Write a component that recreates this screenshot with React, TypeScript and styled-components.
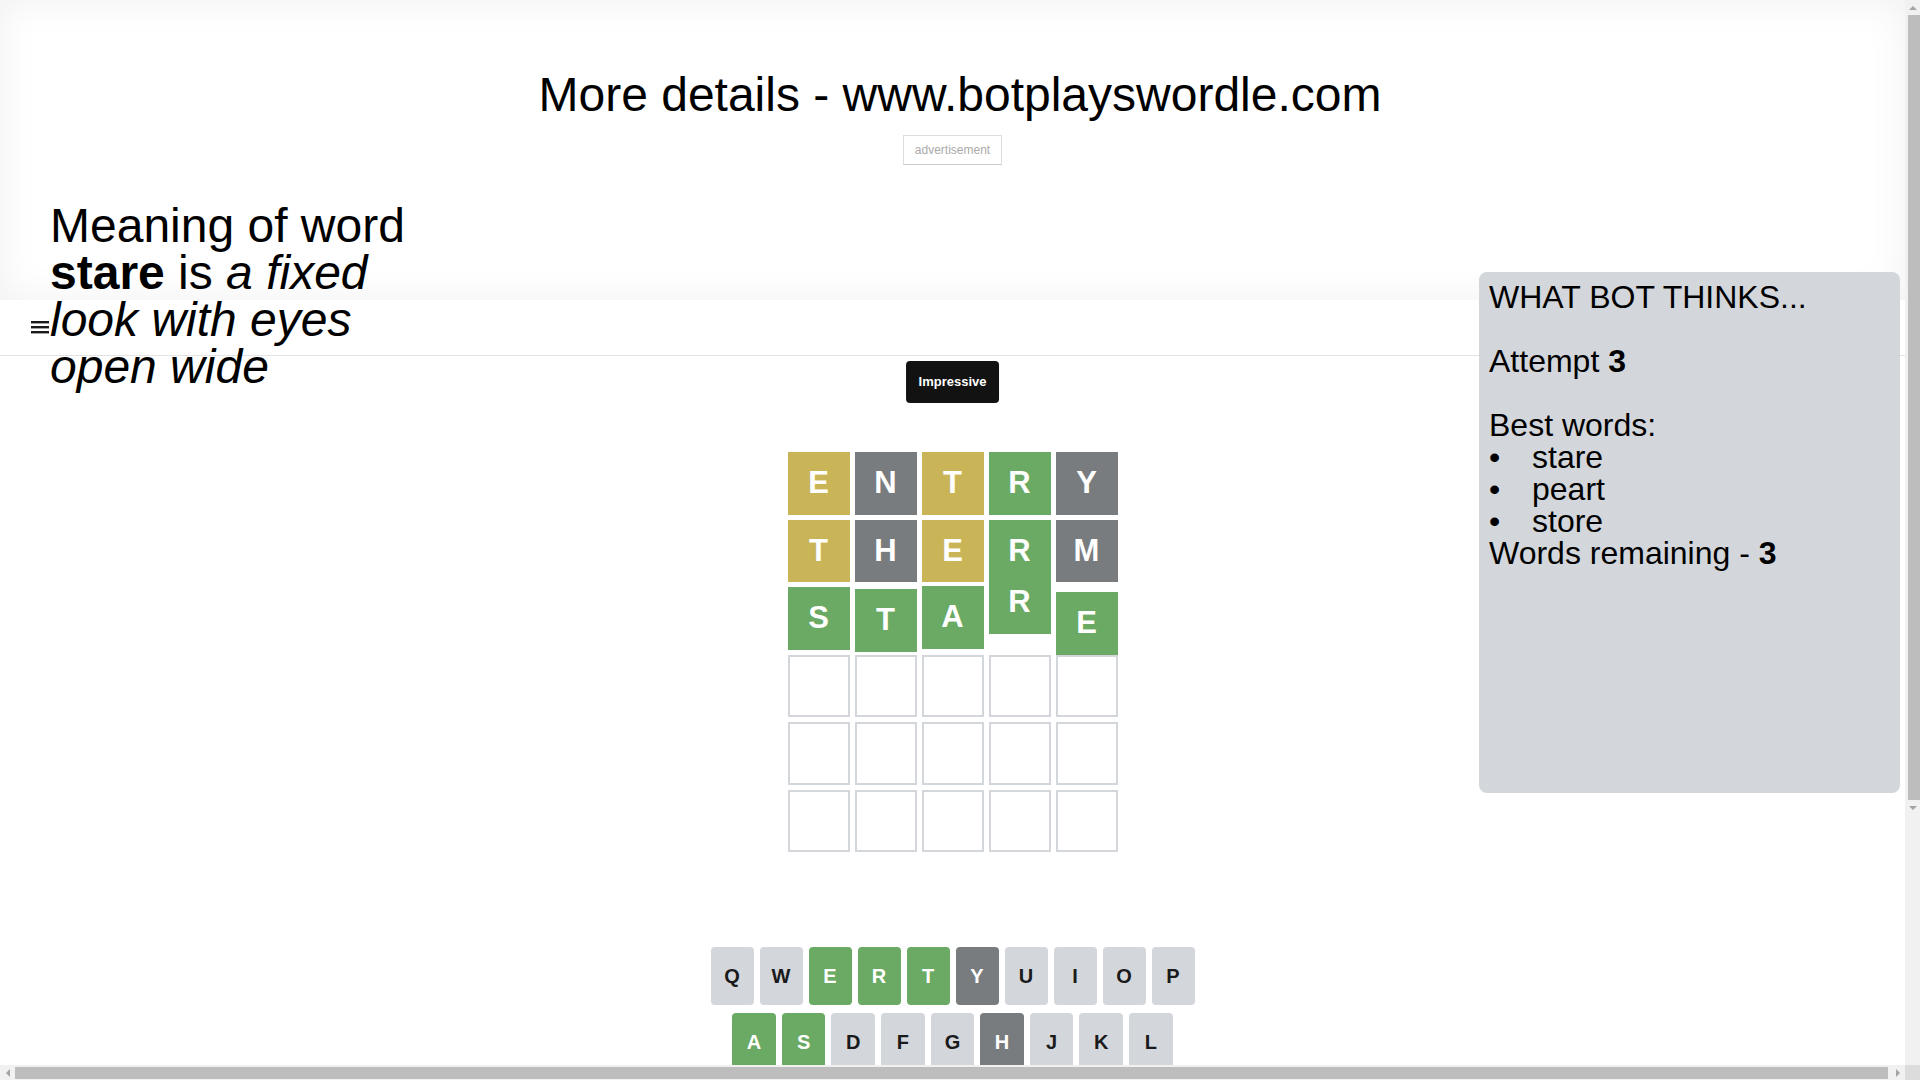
import styled, { createGlobalStyle } from "styled-components";

type TileState = "correct" | "present" | "absent" | "empty";
type KeyTone = "correct" | "present" | "absent" | "unused";
type ArrowDir = "up" | "down" | "left" | "right";

const tileColors: Record<TileState, string> = {
  correct: "#6aaa64",
  present: "#c9b458",
  absent: "#787c7e",
  empty: "#ffffff",
};

const keyColors: Record<KeyTone, string> = {
  correct: "#6aaa64",
  present: "#c9b458",
  absent: "#787c7e",
  unused: "#d3d6da",
};

const guesses: { letter: string; state: TileState; shift?: number }[][] = [
  [
    { letter: "E", state: "present" },
    { letter: "N", state: "absent" },
    { letter: "T", state: "present" },
    { letter: "R", state: "correct" },
    { letter: "Y", state: "absent" },
  ],
  [
    { letter: "T", state: "present" },
    { letter: "H", state: "absent" },
    { letter: "E", state: "present" },
    { letter: "R", state: "correct" },
    { letter: "M", state: "absent" },
  ],
  // last row is caught mid-bounce
  [
    { letter: "S", state: "correct", shift: 0 },
    { letter: "T", state: "correct", shift: 2 },
    { letter: "A", state: "correct", shift: -1 },
    { letter: "R", state: "correct", shift: -16 },
    { letter: "E", state: "correct", shift: 5 },
  ],
];

const keyRows: { key: string; tone: KeyTone }[][] = [
  [
    { key: "Q", tone: "unused" },
    { key: "W", tone: "unused" },
    { key: "E", tone: "correct" },
    { key: "R", tone: "correct" },
    { key: "T", tone: "correct" },
    { key: "Y", tone: "absent" },
    { key: "U", tone: "unused" },
    { key: "I", tone: "unused" },
    { key: "O", tone: "unused" },
    { key: "P", tone: "unused" },
  ],
  [
    { key: "A", tone: "correct" },
    { key: "S", tone: "correct" },
    { key: "D", tone: "unused" },
    { key: "F", tone: "unused" },
    { key: "G", tone: "unused" },
    { key: "H", tone: "absent" },
    { key: "J", tone: "unused" },
    { key: "K", tone: "unused" },
    { key: "L", tone: "unused" },
  ],
  [
    { key: "ENTER", tone: "unused" },
    { key: "Z", tone: "unused" },
    { key: "X", tone: "unused" },
    { key: "C", tone: "unused" },
    { key: "V", tone: "unused" },
    { key: "B", tone: "unused" },
    { key: "N", tone: "absent" },
    { key: "M", tone: "absent" },
    { key: "BACK", tone: "unused" },
  ],
];

const bestWords = ["stare", "peart", "store"];

const GlobalStyle = createGlobalStyle`
  html, body {
    margin: 0;
    padding: 0;
    background: #ffffff;
  }
`;

const App = () => {
  const rows = [...guesses];
  while (rows.length < 6) {
    rows.push(Array.from({ length: 5 }, () => ({ letter: "", state: "empty" as TileState })));
  }

  return (
    <Page>
      <GlobalStyle />
      <Banner>
        <Title>More details - www.botplayswordle.com</Title>
        <AdBox>advertisement</AdBox>
      </Banner>

      <Header>
        <MenuIcon width="18" height="13" viewBox="0 0 18 13">
          <rect x="0" y="0" width="18" height="2.4" />
          <rect x="0" y="5" width="18" height="2.4" />
          <rect x="0" y="10" width="18" height="2.4" />
        </MenuIcon>
      </Header>

      <Game>
        <Toast>Impressive</Toast>
        <BoardContainer>
          <Board>
            {rows.map((row, r) => (
              <BoardRow key={r}>
                {row.map((tile, c) => (
                  <Tile key={c} $state={tile.state} $shift={(tile as { shift?: number }).shift ?? 0}>
                    {tile.letter}
                  </Tile>
                ))}
              </BoardRow>
            ))}
          </Board>
        </BoardContainer>

        <Keyboard>
          {keyRows.map((row, i) => (
            <KeyRow key={i}>
              {i === 1 && <HalfSpacer />}
              {row.map((k) => (
                <Key key={k.key} $tone={k.tone} $wide={k.key.length > 1}>
                  {k.key === "BACK" ? (
                    <svg width="24" height="24" viewBox="0 0 24 24">
                      <path
                        fill="#1a1a1b"
                        d="M22 3H7c-.69 0-1.230.35-1.59.88L0 12l5.41 8.11c.36.53.9.89 1.59.89h15c1.1 0 2-.9 2-2V5c0-1.1-.9-2-2-2zm0 16H7.07L2.4 12l4.66-7H22v14zm-11.59-2L14 13.41 17.59 17 19 15.59 15.41 12 19 8.41 17.59 7 14 10.59 10.41 7 9 8.41 12.590 12 9 15.59z"
                      />
                    </svg>
                  ) : (
                    k.key
                  )}
                </Key>
              ))}
              {i === 1 && <HalfSpacer />}
            </KeyRow>
          ))}
        </Keyboard>
      </Game>

      <Meaning>
        Meaning of word <b>stare</b> is <i>a fixed look with eyes open wide</i>
      </Meaning>

      <BotPanel>
        <PanelLine $gapAfter>WHAT BOT THINKS...</PanelLine>
        <PanelLine $gapAfter>
          Attempt <b>3</b>
        </PanelLine>
        <PanelLine>Best words:</PanelLine>
        <WordList>
          {bestWords.map((w) => (
            <WordItem key={w}>
              <Bullet>•</Bullet>
              {w}
            </WordItem>
          ))}
        </WordList>
        <PanelLine>
          Words remaining - <b>3</b>
        </PanelLine>
      </BotPanel>

      {/* browser scrollbars, as they show in the screenshot */}
      <VScroll>
        <Arrow $dir="up" />
        <VThumb />
        <Arrow $dir="down" />
      </VScroll>
      <HScroll>
        <Arrow $dir="left" />
        <HThumb />
        <Arrow $dir="right" />
      </HScroll>
      <ScrollCorner />
    </Page>
  );
};

export default App;

const Page = styled.div`
  position: relative;
  width: 1905px;
  min-height: 1426px;
  font-family: "Liberation Sans", Arial, sans-serif;
  color: #000;
`;

const Banner = styled.div`
  height: 300px;
  box-sizing: border-box;
  padding-top: 67px;
  background: #ffffff;
  box-shadow: inset 0 0 40px rgba(0, 0, 0, 0.06);
`;

const Title = styled.h1`
  width: 1920px;
  margin: 0;
  font-size: 48px;
  font-weight: normal;
  text-align: center;
`;

const AdBox = styled.div`
  width: fit-content;
  margin: 13px auto 0;
  padding: 7px 11px;
  border: 1px solid #dedede;
  border-bottom-color: #cccccc;
  font-size: 12px;
  line-height: 14px;
  color: #aaaaaa;
  background: #ffffff;
`;

const Header = styled.header`
  height: 55px;
  display: flex;
  align-items: center;
  padding-left: 31px;
  border-bottom: 1px solid #e3e3e3;
  background: #ffffff;
`;

const MenuIcon = styled.svg`
  fill: #1a1a1b;
`;

const Game = styled.main`
  position: relative;
  width: 500px;
  margin: 0 auto;
  padding-top: 86px;
`;

const Toast = styled.div`
  position: absolute;
  top: 5px;
  left: 50%;
  transform: translateX(-50%);
  padding: 13px 13px;
  border-radius: 4px;
  background: #121213;
  color: #ffffff;
  font-size: 13px;
  font-weight: bold;
  line-height: 16px;
  white-space: nowrap;
`;

const BoardContainer = styled.div`
  width: 350px;
  margin: 0 auto;
  padding: 10px;
  box-sizing: border-box;
`;

const Board = styled.div`
  width: 330px;
  height: 400px;
  display: grid;
  grid-template-rows: repeat(6, 1fr);
  gap: 5px;
`;

const BoardRow = styled.div`
  display: grid;
  grid-template-columns: repeat(5, 1fr);
  gap: 5px;
`;

const Tile = styled.div<{ $state: TileState; $shift: number }>`
  display: flex;
  align-items: center;
  justify-content: center;
  box-sizing: border-box;
  background: ${({ $state }) => tileColors[$state]};
  border: ${({ $state }) => ($state === "empty" ? "2px solid #d3d6da" : "none")};
  color: #ffffff;
  font-size: 31px;
  font-weight: bold;
  transform: translateY(${({ $shift }) => $shift}px);
`;

const Keyboard = styled.div`
  width: 484px;
  margin: 85px auto 0;
  display: flex;
  flex-direction: column;
  gap: 8px;
`;

const KeyRow = styled.div`
  display: flex;
`;

const HalfSpacer = styled.div`
  flex: 0.5;
`;

const Key = styled.button<{ $tone: KeyTone; $wide: boolean }>`
  flex: ${({ $wide }) => ($wide ? 1.5 : 1)};
  height: 58px;
  margin: 0 6px 0 0;
  padding: 0;
  border: 0;
  border-radius: 4px;
  display: flex;
  align-items: center;
  justify-content: center;
  background: ${({ $tone }) => keyColors[$tone]};
  color: ${({ $tone }) => ($tone === "unused" ? "#1a1a1b" : "#ffffff")};
  font-family: "Liberation Sans", Arial, sans-serif;
  font-size: ${({ $wide }) => ($wide ? "12px" : "20px")};
  font-weight: bold;

  &:last-of-type {
    margin: 0;
  }
`;

const Meaning = styled.div`
  position: absolute;
  top: 202px;
  left: 50px;
  width: 380px;
  font-size: 48px;
  line-height: 47px;
`;

const BotPanel = styled.aside`
  position: absolute;
  top: 272px;
  right: 5px;
  width: 421px;
  height: 521px;
  box-sizing: border-box;
  padding: 9px 10px;
  border-radius: 8px;
  background: #d3d6da;
  font-size: 32px;
  line-height: 32px;
`;

const PanelLine = styled.div<{ $gapAfter?: boolean }>`
  margin-bottom: ${({ $gapAfter }) => ($gapAfter ? "32px" : "0")};
`;

const WordList = styled.ul`
  margin: 0;
  padding: 0;
  list-style: none;
`;

const WordItem = styled.li`
  display: flex;
`;

const Bullet = styled.span`
  width: 43px;
  flex-shrink: 0;
`;

const VScroll = styled.div`
  position: fixed;
  top: 0;
  right: 0;
  width: 15px;
  height: 1065px;
  background: #f1f1f1;
  display: flex;
  flex-direction: column;
  align-items: center;
`;

const HScroll = styled.div`
  position: fixed;
  left: 0;
  bottom: 0;
  width: 1905px;
  height: 15px;
  background: #f1f1f1;
  display: flex;
  align-items: center;
`;

const VThumb = styled.div`
  width: 12px;
  height: 785px;
  margin-left: 2px;
  background: #bdbdbd;
`;

const HThumb = styled.div`
  flex: 1;
  height: 12px;
  margin-right: 2px;
  background: #bdbdbd;
`;

const ScrollCorner = styled.div`
  position: fixed;
  right: 0;
  bottom: 0;
  width: 15px;
  height: 15px;
  background: #dcdcdc;
`;

const Arrow = styled.div<{ $dir: ArrowDir }>`
  width: 15px;
  height: 15px;
  flex-shrink: 0;
  display: flex;
  align-items: center;
  justify-content: center;

  &::after {
    content: "";
    width: 0;
    height: 0;
    border: 4px solid transparent;
    ${({ $dir }) =>
      $dir === "up"
        ? "border-bottom-color: #a3a3a3; border-top-width: 0;"
        : $dir === "down"
        ? "border-top-color: #a3a3a3; border-bottom-width: 0;"
        : $dir === "left"
        ? "border-right-color: #a3a3a3; border-left-width: 0;"
        : "border-left-color: #a3a3a3; border-right-width: 0;"}
  }
`;
